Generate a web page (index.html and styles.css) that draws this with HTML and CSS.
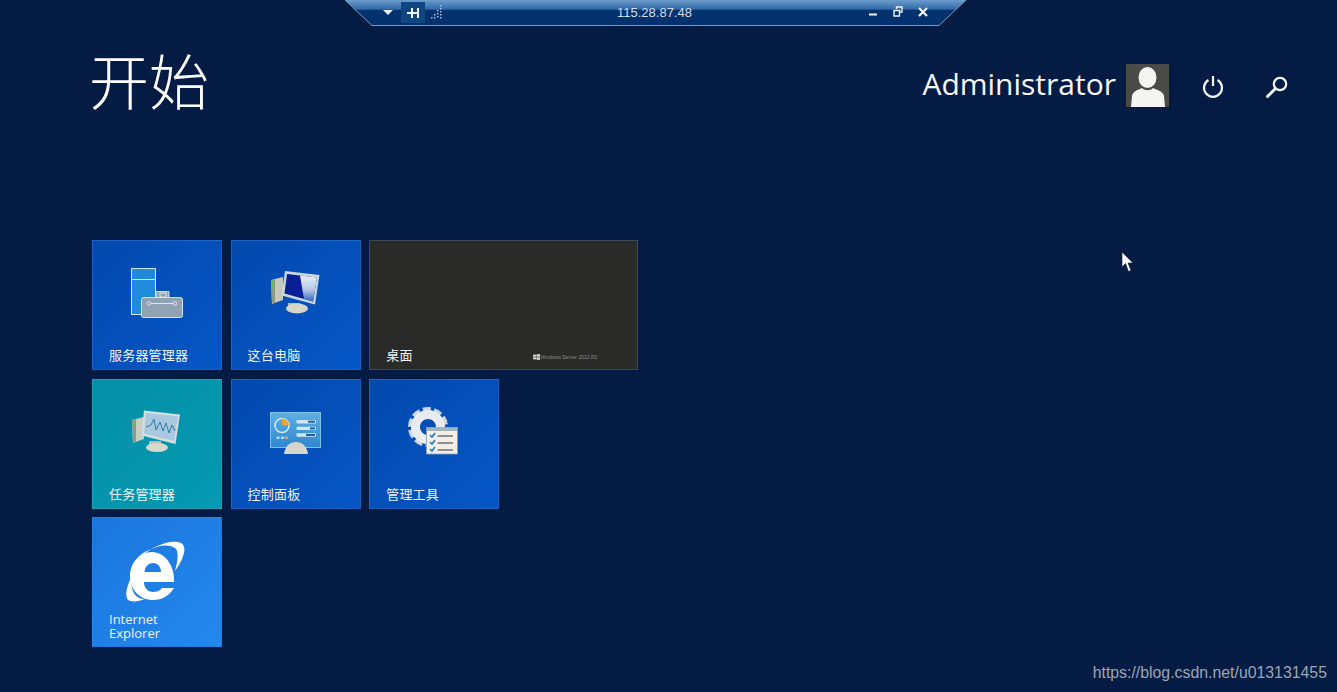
FILE: index.html
```html
<!DOCTYPE html>
<html lang="zh-CN">
<head>
<meta charset="utf-8">
<title>开始</title>
<link rel="stylesheet" href="styles.css">
</head>
<body>
<div class="rdp-bar">
  <svg class="rdp-shape" viewBox="0 0 621 27" width="621" height="27">
    <defs>
      <linearGradient id="barGrad" x1="0" y1="0" x2="0" y2="1">
        <stop offset="0" stop-color="#6d9ccb"/>
        <stop offset=".36" stop-color="#2f6aa8"/>
        <stop offset=".4" stop-color="#03336f"/>
        <stop offset="1" stop-color="#03306c"/>
      </linearGradient>
    </defs>
    <path d="M0 0H621L594 25.500H27Z" fill="url(#barGrad)"/>
    <path d="M0 0L27 25.500H594L621 0" fill="none" stroke="#7a9cc2" stroke-width="1"/>
  </svg>
  <div class="rdp-left">
    <svg class="rdp-drop" width="10" height="6" viewBox="0 0 10 6"><path d="M0 0H10L5 5Z" fill="#e6edf5"/></svg>
    <span class="rdp-pin">
      <svg width="13" height="10" viewBox="0 0 13 10"><path d="M0 5H11M5 0V10M11 0V10" fill="none" stroke="#f2f6fa" stroke-width="2"/></svg>
    </span>
    <svg class="rdp-signal" width="13" height="15" viewBox="0 0 13 15"><path d="M1 13h1.500v1.500H1zM4 10h1.500v1.500H4zM4 13h1.500v1.500H4zM7 6h1.500v1.500H7zM7 9h1.500v1.500H7zM7 12h1.500v1.500H7zM10 1h1.500v1.500H10zM10 4h1.500v1.500H10zM10 7h1.500v1.500H10zM10 10h1.500v1.500H10zM10 13h1.500v1.500H10z" fill="#a9bcd2"/></svg>
  </div>
  <div class="rdp-ip">115.28.87.48</div>
  <div class="rdp-right">
    <svg width="10" height="10" viewBox="0 0 10 10"><path d="M1 7.500H9" stroke="#eef3f8" stroke-width="2"/></svg>
    <svg width="10" height="11" viewBox="0 0 10 11"><path d="M3.500 3V1H9V6H7M1 4.500H6.500V10H1Z" fill="none" stroke="#eef3f8" stroke-width="1.400"/></svg>
    <svg width="10" height="10" viewBox="0 0 10 10"><path d="M1 1L9 9M9 1L1 9" stroke="#f5f8fb" stroke-width="2.200"/></svg>
  </div>
</div>

<header class="top">
  <h1 class="title">开始</h1>
  <div class="user">
    <span class="user-name">Administrator</span>
    <svg class="avatar" width="43" height="43" viewBox="0 0 43 43">
      <rect width="43" height="43" fill="#4a4b46"/>
      <ellipse cx="21.500" cy="13.500" rx="9" ry="10.500" fill="#f4f4f2"/>
      <path d="M5 43L6 32C7 27 12 26 16 24C19 27 24 27 27 24C31 26 37 27 38 32L39 43Z" fill="#f4f4f2"/>
    </svg>
    <svg class="power" width="24" height="24" viewBox="0 0 24 24"><path d="M7.500 6A9 9 0 1 0 16.500 6M12 2V12" fill="none" stroke="#f2f5f8" stroke-width="2.200"/></svg>
    <svg class="search" width="24" height="24" viewBox="0 0 24 24"><circle cx="15" cy="9" r="6.200" fill="none" stroke="#f2f5f8" stroke-width="2.200"/><path d="M10.500 13.500L2.500 21.500" stroke="#f2f5f8" stroke-width="3" stroke-linecap="round"/></svg>
  </div>
</header>

<main class="tiles">
  <a class="tile blue">
    <svg class="icon" width="64" height="64" viewBox="0 0 64 64">
      <rect x="6.500" y="2.500" width="24" height="46" fill="#1f8bd9" stroke="#cfe9f2"/>
      <path d="M6.500 13.500H30.500" stroke="#cfe9f2"/>
      <path d="M31 31V25.500H44V31" fill="#8fa3b5" stroke="#cfe2ea"/>
      <rect x="35" y="27" width="6" height="4" fill="none" stroke="#dfe8ee"/>
      <rect x="16.500" y="31.500" width="41" height="20" rx="2" fill="#91a2b4" stroke="#d2e6ea"/>
      <path d="M23 37.500H51" stroke="#dfe8ee"/>
      <circle cx="24" cy="37.500" r="1.800" fill="#91a2b4" stroke="#e6eef2" stroke-width=".8"/>
      <circle cx="50" cy="37.500" r="1.800" fill="#91a2b4" stroke="#e6eef2" stroke-width=".8"/>
    </svg>
    <span class="label">服务器管理器</span>
  </a>
  <a class="tile blue">
    <svg class="icon" width="64" height="64" viewBox="0 0 64 64">
      <defs>
        <linearGradient id="glare" x1="0" y1="0" x2="0" y2="1">
          <stop offset="0" stop-color="#e6eef6"/><stop offset=".55" stop-color="#b4c9e6"/><stop offset="1" stop-color="#2f62c4"/>
        </linearGradient>
      </defs>
      <path d="M7 14L19 11V34L8 38Z" fill="#c7c9bb"/>
      <path d="M7 14L11 13V37L8 38Z" fill="#8f9a86"/>
      <rect x="8" y="16" width="2" height="5" fill="#5fc35a"/>
      <path d="M24 37H36V42H24Z" fill="#b9b9ab"/>
      <ellipse cx="33" cy="42.500" rx="11" ry="5" fill="#d5d5c8"/>
      <path d="M21 5L55.500 9L51 38.500L17.500 29.500Z" fill="#c9d6dc"/>
      <path d="M23 8L53 11.500L49 35.500L20.500 27.500Z" fill="#0a1f96"/>
      <path d="M36 9.500L53 11.500L49 35.500L40 33Z" fill="url(#glare)"/>
    </svg>
    <span class="label">这台电脑</span>
  </a>
  <a class="tile desktop">
    <span class="desktop-row">
      <span class="label">桌面</span>
      <span class="brand">
        <svg width="7" height="6" viewBox="0 0 7 6"><path d="M0 .8L3 .4V2.800H0ZM3.400 .3L7 0V2.800H3.400ZM0 3.200H3V5.600L0 5.200ZM3.400 3.200H7V6L3.400 5.700Z" fill="#d0d0ce"/></svg>
        Windows Server 2012 R2
      </span>
    </span>
  </a>
  <a class="tile teal">
    <svg class="icon" width="64" height="64" viewBox="0 0 64 64">
      <path d="M7 15L19 12V34L8 38Z" fill="#c9cfc5"/>
      <path d="M7 15L11 14V37L8 38Z" fill="#8d9a90"/>
      <rect x="8" y="17" width="2" height="4" fill="#5fc35a"/>
      <path d="M24 36H36V42H24Z" fill="#b9bdb0"/>
      <ellipse cx="32" cy="42.500" rx="11" ry="4.500" fill="#d8d8cc"/>
      <path d="M19 5.500L55 9.500L50.500 39L16.500 30.500Z" fill="#d4dedf"/>
      <path d="M21 8L53 11.500L49 36L19 28.500Z" fill="#a9c7de"/>
      <path d="M21 22L26 20L29 14L31 25L35 17L38 26L41 18L44 28L47 20L50 26" fill="none" stroke="#2f7ea4" stroke-width="1"/>
    </svg>
    <span class="label">任务管理器</span>
  </a>
  <a class="tile blue">
    <svg class="icon" width="64" height="64" viewBox="0 0 64 64">
      <defs>
        <linearGradient id="panelG" x1="0" y1="0" x2="0" y2="1">
          <stop offset="0" stop-color="#5fb0e4"/><stop offset="1" stop-color="#2e86cf"/>
        </linearGradient>
      </defs>
      <rect x="6" y="7" width="51" height="36" fill="url(#panelG)"/>
      <rect x="6.500" y="7.500" width="50" height="35" fill="none" stroke="#7fc3ea" stroke-width="1"/>
      <circle cx="18" cy="20.500" r="7" fill="none" stroke="#cfeaf7" stroke-width="1.600"/>
      <path d="M18 13.500A7 7 0 0 1 25 20.500H18Z" fill="#f0a33c"/>
      <rect x="32.500" y="15" width="19.500" height="3.400" rx="1" fill="#cfe9f7"/>
      <rect x="32.500" y="21.700" width="19.500" height="3.400" rx="1" fill="#cfe9f7"/>
      <rect x="32.500" y="28.300" width="19.500" height="3.400" rx="1" fill="#cfe9f7"/>
      <rect x="44" y="15.700" width="7" height="2" fill="#1c5fa8"/>
      <rect x="46" y="22.400" width="5" height="2" fill="#1c5fa8"/>
      <rect x="42" y="29" width="9" height="2" fill="#1c5fa8"/>
      <rect x="12.500" y="31.500" width="3" height="2.500" fill="#a5dcf2"/>
      <rect x="17" y="31.500" width="3" height="2.500" fill="#a5dcf2"/>
      <rect x="21" y="31.500" width="3" height="2.500" fill="#f0a33c"/>
      <path d="M20 49C21 41 26 37 32 37C38 37 43 41 44 49Z" fill="#d8d6cb"/>
    </svg>
    <span class="label">控制面板</span>
  </a>
  <a class="tile blue">
    <svg class="icon" width="64" height="64" viewBox="0 0 64 64">
      <circle cx="26" cy="22" r="18" fill="none" stroke="#cfd8e0" stroke-width="4" stroke-dasharray="8 3.300"/>
      <circle cx="26" cy="22" r="12.500" fill="none" stroke="#e8ecf0" stroke-width="9"/>
      <rect x="24.500" y="22.500" width="31" height="26.500" fill="#f3efe6" stroke="#8ea0a8" stroke-width=".8"/>
      <rect x="25" y="23" width="30" height="3" fill="#9fb3c0"/>
      <path d="M28 30L30 32L33 28M28 37L30 39L33 35M28 44L30 46L33 42" fill="none" stroke="#1d78c8" stroke-width="1.600"/>
      <path d="M35.500 31H51M35.500 38H51M35.500 45H51" stroke="#68747c" stroke-width="1.300"/>
    </svg>
    <span class="label">管理工具</span>
  </a>
  <a class="tile ie">
    <svg class="icon-ie" width="64" height="64" viewBox="0 0 64 64">
      <path fill-rule="evenodd" fill="#fff" d="M49 42C50 26 40 12 27 12C14 12 5 24 5 36C5 50 15 60 28 60C37 60 44 56 49 48L37 48C35 51 31 52 28 52C23 52 19 48 19 42ZM19.500 32C20 26 24 23 28 23C33 23 36 27 36 32Z"/>
      <path fill="#fff" d="M6 27C18 10 44 -2 56 3C62 6 60 17 50 31C53 20 54 11 50 8C44 4 34 5 27 9C18 11 11 18 6 27Z"/>
      <path fill="#fff" d="M6 38C1 48 0 56 3 60C6 62 13 62 20 59C12 59 6 54 6 38Z"/>
    </svg>
    <span class="label label-en">Internet<br>Explorer</span>
  </a>
</main>

<svg class="cursor" width="13" height="22" viewBox="0 0 13 22"><path d="M1 1V16L4.500 12.500L7.500 20.500L10 19.500L7 12H12Z" fill="#fff" stroke="#0b1c3a" stroke-width=".6"/></svg>
<div class="watermark">https://blog.csdn.net/u013131455</div>
</body>
</html>
```
FILE: styles.css
```css
* { box-sizing: border-box; }

html, body {
  margin: 0;
  height: 692px;
  overflow: hidden;
}

body {
  position: relative;
  background: #041c43;
  color: #fff;
  font-family: "Open Sans", "Noto Sans CJK SC", sans-serif;
}

/* remote-desktop connection bar (overlay) */
.rdp-bar {
  position: absolute;
  top: 0;
  left: 345px;
  width: 621px;
  height: 27px;
  display: flex;
  align-items: center;
  padding-bottom: 3px;
}

.rdp-shape {
  position: absolute;
  top: 0;
  left: 0;
}

.rdp-left, .rdp-ip, .rdp-right {
  position: relative;
  display: flex;
  align-items: center;
}

.rdp-left {
  width: 272px;
  padding-left: 38px;
  margin-top: 1px;
}

.rdp-drop { margin-right: 8px; }

.rdp-pin {
  width: 24px;
  height: 21px;
  display: flex;
  align-items: center;
  justify-content: center;
  background: #0f4580;
  margin-right: 5px;
}

.rdp-signal { margin-top: -3px; }

.rdp-ip {
  width: 77px;
  font-family: "Liberation Sans", sans-serif;
  font-size: 13px;
  color: #d3deea;
  white-space: nowrap;
}

.rdp-right {
  margin-left: 174px;
  gap: 15px;
  margin-top: -1px;
}

/* header */
.top {
  height: 240px;
  display: flex;
  justify-content: space-between;
  align-items: flex-start;
  padding: 0 48px 0 89px;
}

.title {
  margin: 36px 0 0;
  font-family: "Noto Sans CJK SC", sans-serif;
  font-size: 60px;
  font-weight: 300;
  line-height: 86px;
}

.user {
  display: flex;
  align-items: center;
  margin-top: 64px;
  height: 43px;
}

.user-name {
  font-size: 30px;
  line-height: 43px;
  margin-right: 10px;
  margin-bottom: 4px;
  color: #f6f8fa;
}

.power { margin-left: 32px; margin-top: 1px; }
.search { margin-left: 40px; margin-top: 3px; }

/* start tiles */
.tiles {
  display: grid;
  grid-template-columns: repeat(4, 130px);
  grid-auto-rows: 130px;
  gap: 8.6px;
  margin-left: 92px;
  width: 560px;
}

.tile {
  display: flex;
  flex-direction: column;
  align-items: flex-start;
  padding: 0 16px 6px;
  border: 1px solid rgba(255, 255, 255, .1);
}

.blue { background: linear-gradient(135deg, #0349ae, #0556c6); }
.teal { background: linear-gradient(135deg, #0590a6, #0599b3); }

.ie {
  grid-column: 1;
  background: linear-gradient(135deg, #1b76dd, #2488ee);
  border-color: transparent;
}

.desktop {
  grid-column: span 2;
  background: #2a2b29;
  border-color: #3c4852;
}

.icon, .icon-ie {
  align-self: flex-start;
  margin-left: 16px;
  filter: blur(.35px);
}

.icon { margin-top: 25px; }
.icon-ie { margin-top: 22px; }

.label {
  margin-top: auto;
  font-family: "Noto Sans CJK SC", sans-serif;
  font-size: 13px;
  line-height: 16px;
  letter-spacing: .2px;
  color: #eef3f8;
  white-space: nowrap;
}

.label-en {
  font-family: "Open Sans", sans-serif;
  font-size: 13px;
  line-height: 14px;
  letter-spacing: 0;
}

.desktop-row {
  display: flex;
  align-items: center;
  margin-top: auto;
}

.brand {
  display: flex;
  align-items: center;
  gap: 1px;
  margin-left: 120px;
  margin-top: 3px;
  font-family: "Liberation Sans", sans-serif;
  font-size: 5px;
  color: #8d8d8a;
  white-space: nowrap;
}

/* overlays */
.cursor {
  position: absolute;
  left: 1121px;
  top: 251px;
}

.watermark {
  position: absolute;
  right: 10px;
  bottom: 9px;
  font-family: "Liberation Sans", sans-serif;
  font-size: 15.850px;
  line-height: 20px;
  color: #9aa6b6;
}
```
